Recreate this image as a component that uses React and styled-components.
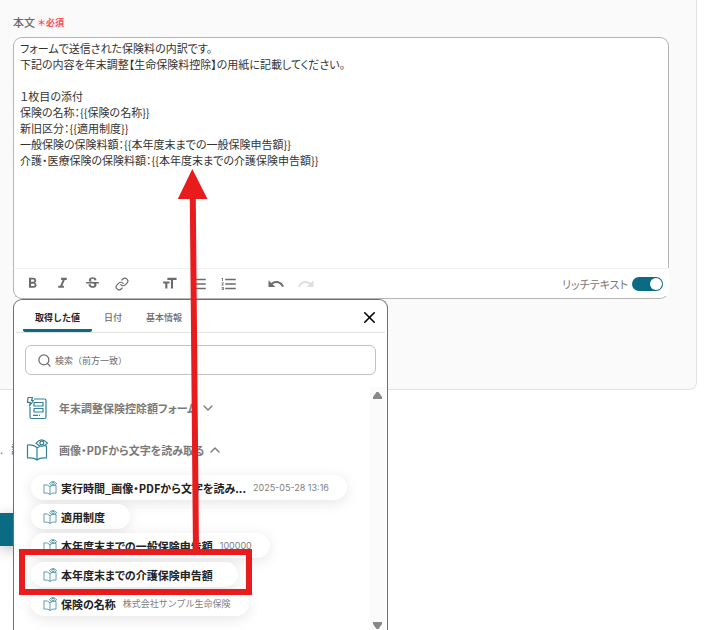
import React, { useState } from 'react';
import styled, { createGlobalStyle, css } from 'styled-components';
import { ChevronDown, ChevronUp, Link, Search, X } from 'lucide-react';
import {
	MdFormatBold,
	MdFormatItalic,
	MdFormatListBulleted,
	MdFormatListNumbered,
	MdFormatSize,
	MdRedo,
	MdStrikethroughS,
	MdUndo
} from 'react-icons/md';

const TEAL = '#0b6a84';
const ICON_TEAL = '#2f8298';
const RED = '#e81c1c';
const GRAY = '#6b6b6b';

const BODY = `フォームで送信された保険料の内訳です。
下記の内容を年末調整【生命保険料控除】の用紙に記載してください。

１枚目の添付
保険の名称：{{保険の名称}}
新旧区分：{{適用制度}}
一般保険の保険料額：{{本年度末までの一般保険申告額}}
介護・医療保険の保険料額：{{本年度末までの介護保険申告額}}`;

const TOOLS = [
	[
		{ name: '太字', icon: <MdFormatBold size={17} /> },
		{ name: '斜体', icon: <MdFormatItalic size={17} /> },
		{ name: '取り消し線', icon: <MdStrikethroughS size={17} /> },
		{ name: 'リンク', icon: <Link size={14} strokeWidth={2} /> }
	],
	[
		{ name: '文字サイズ', icon: <MdFormatSize size={17} /> },
		{ name: '箇条書き', icon: <MdFormatListBulleted size={18} /> },
		{ name: '番号付きリスト', icon: <MdFormatListNumbered size={18} /> }
	],
	[
		{ name: '元に戻す', icon: <MdUndo size={18} /> },
		{ name: 'やり直す', icon: <MdRedo size={18} />, disabled: true }
	]
];

const TABS = ['取得した値', '日付', '基本情報'];

const VALUES = [
	{ label: '実行時間_画像・PDFから文字を読み...', value: '2025-05-28 13:16' },
	{ label: '適用制度' },
	{ label: '本年度末までの一般保険申告額', value: '100000' },
	{ label: '本年度末までの介護保険申告額' },
	{ label: '保険の名称', value: '株式会社サンプル生命保険' }
];

const FormIcon = () => (
	<svg width="22" height="24" viewBox="0 0 22 24" fill="none" stroke={ICON_TEAL} strokeWidth="1.2" strokeLinejoin="round">
		<path d="M8 3h10.500q1.500 0 1.500 1.500v16.500q0 1.500-1.500 1.500H5.500q-1.500 0-1.500-1.500V11" />
		<path d="M2 1.500h4.500L5.500 4.500h2L3.500 10l.8-3.700H1.500z" />
		<path d="M8 6.500h9v3.500H8zM8 12.500h9V16H8z" />
		<path d="M7 19.300h5M13 19.300h1" />
	</svg>
);

const BookIcon = ({ size = 22 }) => (
	<svg width={size} height={size} viewBox="0 0 22 22" fill="none" stroke={ICON_TEAL} strokeWidth="1.2" strokeLinejoin="round">
		<path d="M11 21Q8 18.300 1.500 19V6Q8 5.500 11 9Q12.500 7.800 14 7.500M18.500 7h2V19Q14 18.300 11 21V9" />
		<path d="M10 4.200Q15.500-2.500 21.500 4.200Q15.500 10.500 10 4.200z" />
		<circle cx="15.800" cy="4" r="1.900" />
	</svg>
);

const ValuePicker = () => {
	const [tab, setTab] = useState(TABS[0]);

	return (
		<Picker>
			<TabBar>
				{TABS.map((name) => (
					<Tab key={name} $active={name === tab} onClick={() => setTab(name)}>
						{name}
					</Tab>
				))}
				<CloseButton aria-label="閉じる">
					<X size={19} strokeWidth={2} />
				</CloseButton>
			</TabBar>
			<SearchBox>
				<Search size={15} strokeWidth={2} />
				<SearchInput type="search" aria-label="検索" placeholder="検索（前方一致）" />
			</SearchBox>
			<ScrollArea>
				<Groups>
					<GroupHeader>
						<GroupIcon>
							<FormIcon />
						</GroupIcon>
						年末調整保険控除額フォーム
						<ChevronDown size={16} strokeWidth={2} />
					</GroupHeader>
					<GroupHeader>
						<GroupIcon>
							<BookIcon />
						</GroupIcon>
						画像・PDFから文字を読み取る
						<ChevronUp size={16} strokeWidth={2} />
					</GroupHeader>
					<ValueList>
						{VALUES.map(({ label, value }) => (
							<Chip key={label}>
								<BookIcon size={14} />
								<ChipLabel>{label}</ChipLabel>
								<ChipValue>{value}</ChipValue>
							</Chip>
						))}
					</ValueList>
				</Groups>
				<ScrollTrack>
					<svg width="9" height="7" viewBox="0 0 9 7" fill="#888">
						<path d="M3.500 0h2L9 5v2H0V5z" />
					</svg>
					<svg width="9" height="7" viewBox="0 0 9 7" fill="#888">
						<path d="M3.500 7h2L9 2V0H0v2z" />
					</svg>
				</ScrollTrack>
			</ScrollArea>
		</Picker>
	);
};

export default function App() {
	return (
		<Page>
			<GlobalStyle />
			<Card>
				<Label htmlFor="body">
					本文<Required>＊必須</Required>
				</Label>
				<Editor>
					<EditorText id="body" defaultValue={BODY} spellCheck={false} />
					<Toolbar>
						{TOOLS.map((group, i) => (
							<ToolGroup key={i}>
								{group.map(({ name, icon, disabled }) => (
									<ToolButton key={name} aria-label={name} disabled={disabled}>
										{icon}
									</ToolButton>
								))}
							</ToolGroup>
						))}
						<RichText>
							リッチテキスト
							<Switch type="checkbox" role="switch" defaultChecked />
						</RichText>
					</Toolbar>
					<ValuePicker />
				</Editor>
			</Card>
			<Footer>
				<Note>
					<span>.</span>
					<span>記</span>
				</Note>
				<SaveButton aria-label="保存" />
			</Footer>
			<Annotation width="260" height="600" viewBox="0 0 260 600" fill={RED} aria-hidden="true">
				<path d="M192.300 169L207.500 199H195.800L199 552H193L189.800 199H177.800z" />
				<rect x="22" y="552" width="227" height="40" fill="none" stroke={RED} strokeWidth="6" />
			</Annotation>
		</Page>
	);
}

const GlobalStyle = createGlobalStyle`
	* {
		box-sizing: border-box;
	}
	body {
		margin: 0;
		overflow: hidden;
		background: #fff;
		color: #333;
		font-family: 'Noto Sans CJK JP', sans-serif;
		font-size: 11px;
	}
	button, input, textarea {
		font-family: inherit;
	}
	button {
		padding: 0;
		border: 0;
		background: none;
		color: inherit;
		cursor: pointer;
	}
`;

const palt = css`font-feature-settings: 'palt';`;

const Page = styled.div`
	position: relative;
	height: 100vh;
	overflow: hidden;
`;
const Card = styled.section`
	margin-right: 24px;
	padding: 14px 27px 90px 13px;
	background: #fafafa;
	border: 1px solid #e2e2e2;
	border-width: 0 1px 1px 0;
	border-bottom-right-radius: 8px;
`;
const Label = styled.label`
	display: flex;
	align-items: center;
	height: 16px;
	margin-bottom: 7px;
	color: ${GRAY};
	font-weight: 500;
`;
const Required = styled.span`
	margin-left: 2px;
	color: #ff4d5e;
	font-size: 9px;
	font-weight: 700;
`;
const Editor = styled.div`
	position: relative;
`;
const EditorText = styled.textarea`
	display: block;
	width: 100%;
	height: 231px;
	padding: 2px 6px;
	border: 1px solid #b5b5b5;
	border-bottom: 0;
	border-radius: 9px 9px 0 0;
	outline: none;
	resize: none;
	background: #fff;
	color: #333;
	font-size: 11px;
	line-height: 16px;
	${palt}
`;
const Toolbar = styled.div`
	display: flex;
	align-items: center;
	gap: 17px;
	height: 31px;
	padding: 0 5px 0 3px;
	background: #fff;
	border: 1px solid #b5b5b5;
	border-top-color: #f0f0f0;
	border-right-color: #fff;
	border-radius: 0 0 9px 9px;
	color: ${GRAY};
`;
const ToolGroup = styled.div`
	display: flex;
`;
const ToolButton = styled.button`
	display: flex;
	align-items: center;
	justify-content: center;
	width: 30px;
	height: 24px;

	&:disabled {
		color: #ddd;
	}
`;
const RichText = styled.label`
	display: flex;
	align-items: center;
	gap: 4px;
	margin-left: auto;
	color: #777;
	${palt}
`;
const Switch = styled.input`
	appearance: none;
	display: flex;
	align-items: center;
	width: 31px;
	height: 14px;
	margin: 0;
	padding: 0 1px;
	border-radius: 7px;
	background: #bbb;

	&::before {
		content: '';
		width: 12px;
		height: 12px;
		border-radius: 50%;
		background: #fff;
	}
	&:checked {
		justify-content: flex-end;
		background: ${TEAL};
	}
`;
const Picker = styled.div`
	position: absolute;
	top: 100%;
	left: 0;
	z-index: 1;
	width: 375px;
	background: #fff;
	border: 1px solid #707070;
	border-bottom: 0;
	border-radius: 9px 9px 0 0;
`;
const TabBar = styled.div`
	display: flex;
	height: 33px;
	margin: 0 2px;
	padding: 0 6px 0 7px;
	border-bottom: 1px solid #e2e2e2;
`;
const Tab = styled.button`
	height: 32px;
	padding: 6px 12px 0;
	border-bottom: 3px solid ${(p) => (p.$active ? TEAL : 'transparent')};
	border-radius: 2px;
	color: ${(p) => (p.$active ? '#222' : GRAY)};
	font-size: 9px;
	font-weight: ${(p) => (p.$active ? 700 : 500)};
`;
const CloseButton = styled.button`
	display: flex;
	align-items: center;
	margin-left: auto;
	padding-top: 3px;
	color: #000;
`;
const SearchBox = styled.div`
	display: flex;
	align-items: center;
	gap: 3px;
	height: 30px;
	margin: 12px 11px;
	padding: 0 11px;
	border: 1px solid #c2c2c2;
	border-radius: 6px;
	color: ${GRAY};
`;
const SearchInput = styled.input`
	flex: 1;
	padding: 0;
	border: 0;
	outline: none;
	background: none;
	font-size: 9px;

	&::placeholder {
		color: ${GRAY};
	}
`;
const ScrollArea = styled.div`
	display: flex;
	padding-right: 2px;
`;
const Groups = styled.div`
	flex: 1;
	min-width: 0;
	padding: 0 0 14px 12px;
`;
const GroupHeader = styled.button`
	display: flex;
	align-items: center;
	gap: 3px;
	height: 42px;
	color: #7a7a7a;
	font-size: 11px;
	font-weight: 700;
	${palt}
`;
const GroupIcon = styled.span`
	display: flex;
	width: 30px;
`;
const ValueList = styled.div`
	display: flex;
	flex-direction: column;
	align-items: flex-start;
	gap: 4px;
	padding: 4px 0 0 5px;
`;
const Chip = styled.button`
	display: flex;
	align-items: center;
	height: 25px;
	padding: 0 18px 0 12px;
	border-radius: 13px;
	background: #fff;
	box-shadow: 0 3px 14px rgba(0, 0, 0, 0.1);
`;
const ChipLabel = styled.span`
	margin: 0 7px 0 4px;
	color: #222;
	font-size: 11px;
	font-weight: 700;
	white-space: nowrap;
	${palt}
`;
const ChipValue = styled.span`
	color: #808080;
	font-family: Inter, 'Noto Sans CJK JP', sans-serif;
	font-size: 9px;
`;
const ScrollTrack = styled.div`
	display: flex;
	flex-direction: column;
	align-items: center;
	justify-content: space-between;
	width: 15px;
	padding: 5px 0 1px;
	background: #fbfbfb;
`;
const Footer = styled.footer`
	display: flex;
	flex-direction: column;
	align-items: flex-start;
	padding-top: 51px;
`;
const Note = styled.p`
	display: flex;
	gap: 8px;
	margin: 0;
	color: ${GRAY};
	line-height: 16px;
`;
const SaveButton = styled.button`
	width: 120px;
	height: 33px;
	margin-top: 56px;
	background: ${TEAL};
	box-shadow: 0 3px 14px rgba(0, 0, 0, 0.25);
`;
const Annotation = styled.svg`
	position: absolute;
	top: 0;
	left: 0;
	z-index: 2;
	pointer-events: none;
`;
